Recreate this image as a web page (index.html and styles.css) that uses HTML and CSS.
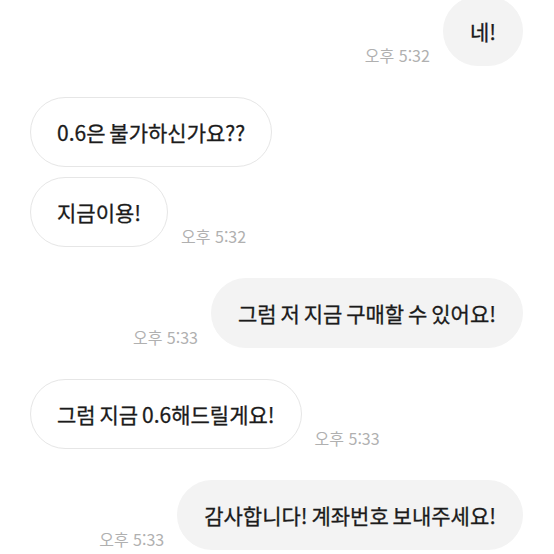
FILE: index.html
```html
<!DOCTYPE html>
<html lang="ko">
<head>
    <meta charset="UTF-8">
    <meta name="viewport" content="width=device-width, initial-scale=1.0">
    <title>채팅</title>
    <link rel="stylesheet" href="styles.css">
</head>
<body>
    <div class="chat">
        <div class="group">
            <div class="row me">
                <span class="time">오후 5:32</span>
                <div class="bubble">네!</div>
            </div>
        </div>

        <div class="group">
            <div class="row">
                <div class="bubble">0.6은 불가하신가요??</div>
            </div>
            <div class="row">
                <div class="bubble">지금이용!</div>
                <span class="time">오후 5:32</span>
            </div>
        </div>

        <div class="group">
            <div class="row me">
                <span class="time">오후 5:33</span>
                <div class="bubble">그럼 저 지금 구매할 수 있어요!</div>
            </div>
        </div>

        <div class="group">
            <div class="row">
                <div class="bubble">그럼 지금 0.6해드릴게요!</div>
                <span class="time">오후 5:33</span>
            </div>
        </div>

        <div class="group">
            <div class="row me">
                <span class="time">오후 5:33</span>
                <div class="bubble">감사합니다! 계좌번호 보내주세요!</div>
            </div>
        </div>
    </div>
</body>
</html>
```

FILE: styles.css
```css
body {
    margin: 0;
    background: #fff;
    font-family: "Noto Sans CJK KR", "Noto Sans", sans-serif;
    color: #1b1b1b;
    overflow: hidden;
}

.chat {
    display: flex;
    flex-direction: column;
    gap: 31px;
    margin-top: -4px;
    padding: 0 31px 0 30px;
}

.group {
    display: flex;
    flex-direction: column;
    gap: 10px;
}

.row {
    display: flex;
    align-items: flex-end;
    gap: 13px;
}

.row.me {
    justify-content: flex-end;
}

.bubble {
    box-sizing: border-box;
    height: 70px;
    padding: 0 26px;
    display: flex;
    align-items: center;
    font-size: 21px;
    word-spacing: -2px;
    -webkit-text-stroke: 0.3px #1b1b1b;
    border-radius: 35px;
    background: #fff;
    border: 1px solid #e6e6e6;
    white-space: nowrap;
}

.me .bubble {
    background: #f3f3f3;
    border-color: #f3f3f3;
}

.time {
    font-size: 16px;
    color: #b0b0b0;
    line-height: 20px;
    margin-bottom: 1px;
    white-space: nowrap;
}
```
